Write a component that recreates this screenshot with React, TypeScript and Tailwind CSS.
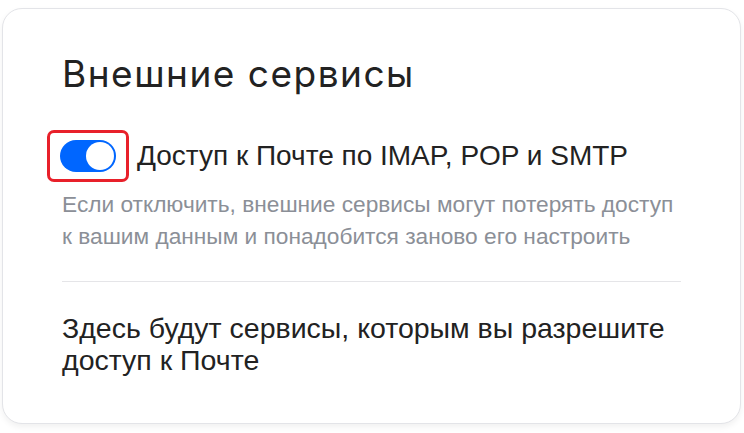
export default function App() {
  return (
    <div className="h-[433px] w-[744px] bg-white pl-[2px] pr-[3px] pt-2 pb-[9px]">
      <div className="h-full rounded-[20px] border border-[#e3e4e8] bg-white px-[59px] pt-[43px] shadow-[0_3px_6px_rgba(0,0,0,0.06)]">
        <h2 className="font-['Inter',sans-serif] text-[37px] leading-[44px] font-normal tracking-[1.5px] text-[#222]">
          Внешние сервисы
        </h2>

        <div className="mt-[34px] flex items-center">
          <div className="-ml-[15px] rounded-[7px] border-[3px] border-[#e8202a] px-[10px] py-[7px]">
            <button
              type="button"
              className="flex h-[32px] w-[56px] items-center justify-end rounded-full bg-[#0066ff] p-[2px]"
            >
              <span className="h-[28px] w-[28px] rounded-full bg-white" />
            </button>
          </div>
          <span className="ml-[8px] font-['Liberation_Sans',Arial,sans-serif] text-[28px] leading-[32px] text-[#222]">
            Доступ к Почте по IMAP, POP и SMTP
          </span>
        </div>

        <p className="mt-[6px] font-['Liberation_Sans',Arial,sans-serif] text-[22.7px] leading-[32px] text-[#8b8f97]">
          Если отключить, внешние сервисы могут потерять доступ
          <br />
          к вашим данным и понадобится заново его настроить
        </p>

        <div className="mt-[29px] h-px bg-[#e5e5e8]" />

        <p className="mt-[30px] font-['Liberation_Sans',Arial,sans-serif] text-[28.5px] leading-[32px] text-[#222]">
          Здесь будут сервисы, которым вы разрешите
          <br />
          доступ к Почте
        </p>
      </div>
    </div>
  )
}
